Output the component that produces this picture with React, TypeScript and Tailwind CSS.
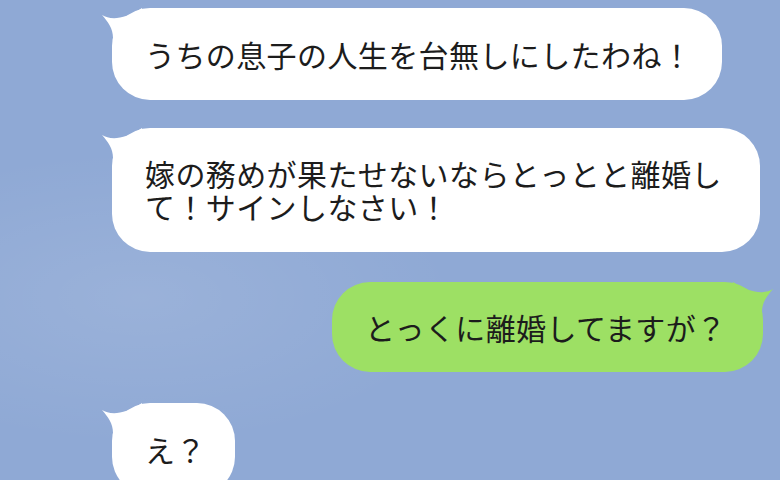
import type { ReactNode } from "react"

const font = {
  fontFamily: '"Noto Sans CJK JP", "Noto Sans", sans-serif',
}

function Tail({ color, flip }: { color: string; flip?: boolean }) {
  return (
    <svg
      width="50"
      height="32"
      viewBox="0 0 50 32"
      className={
        flip
          ? "absolute right-[-12px] top-0 -scale-x-100"
          : "absolute left-[-12px] top-0"
      }
    >
      <path
        d="M2 7 C10 12, 24 12, 42 0 L42 30 L13 30 C13 20, 8 14, 2 7 Z"
        fill={color}
      />
    </svg>
  )
}

function Bubble({
  children,
  size,
  mine,
}: {
  children: ReactNode
  size: string
  mine?: boolean
}) {
  return (
    <div className={mine ? "flex shrink-0 justify-end pr-[17px]" : "flex shrink-0 pl-[112px]"}>
      <div
        className={`relative flex shrink-0 items-center rounded-[38px] pl-[33px] text-[30px] leading-[33px] tracking-[0.4px] text-[#1c1c1c] ${size} ${
          mine ? "bg-[#9de064]" : "bg-white"
        }`}
      >
        <Tail color={mine ? "#9de064" : "#ffffff"} flip={mine} />
        <p className="relative whitespace-nowrap">{children}</p>
      </div>
    </div>
  )
}

export default function App() {
  return (
    <div
      style={font}
      className="flex h-[480px] w-[780px] flex-col overflow-hidden bg-[#8fa9d5] bg-[radial-gradient(ellipse_at_18%_62%,rgba(255,255,255,0.10),transparent_35%)] pt-[8px]"
    >
      <Bubble size="h-[92px] w-[610px]">うちの息子の人生を台無しにしたわね！</Bubble>
      <div className="h-[28px] shrink-0" />
      <Bubble size="h-[124px] w-[648px]">
        嫁の務めが果たせないならとっとと離婚し
        <br />
        て！サインしなさい！
      </Bubble>
      <div className="h-[30px] shrink-0" />
      <Bubble size="h-[90px] w-[431px]" mine>
        とっくに離婚してますが？
      </Bubble>
      <div className="h-[31px] shrink-0" />
      <Bubble size="h-[92px] w-[123px]">え？</Bubble>
    </div>
  )
}
